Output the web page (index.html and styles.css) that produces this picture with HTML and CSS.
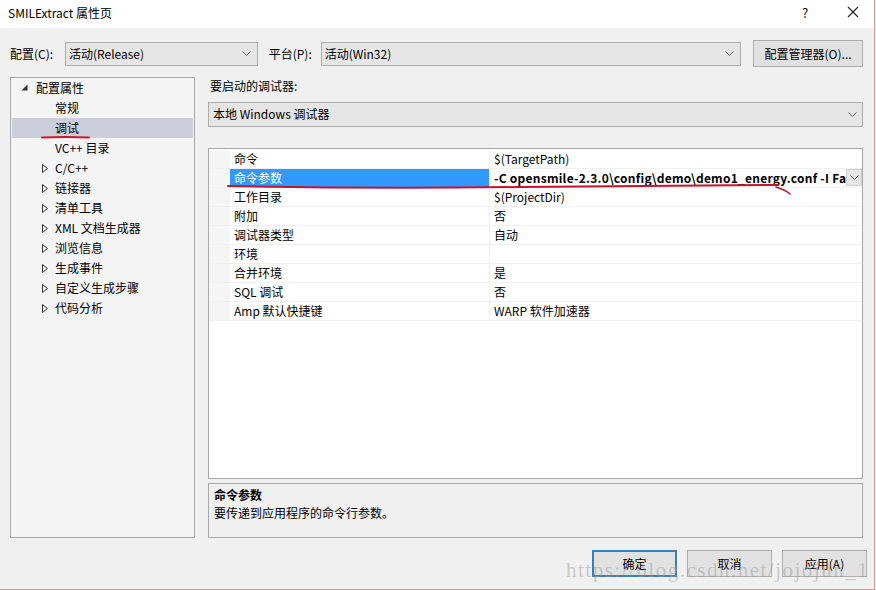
FILE: index.html
```html
<!DOCTYPE html>
<html lang="zh-CN">
<head>
  <meta charset="UTF-8">
  <title>SMILExtract 属性页</title>
  <link rel="stylesheet" href="styles.css">
</head>
<body>
<div class="window">
  <div class="titlebar">
    <span class="title">SMILExtract 属性页</span>
    <span class="tb-help">?</span>
    <svg class="tb-close" width="12" height="12" viewBox="0 0 12 12"><path d="M1 1L11 11M11 1L1 11" stroke="#222" stroke-width="1.1" fill="none"/></svg>
  </div>

  <div class="content">
    <div class="config-row">
      <span class="lbl">配置(C):</span>
      <div class="combo combo-config"><span>活动(Release)</span>
        <svg class="chev" width="9" height="5" viewBox="0 0 9 5"><path d="M0.5 0.5L4.5 4.5L8.5 0.5" stroke="#606060" fill="none"/></svg></div>
      <span class="lbl lbl-platform">平台(P):</span>
      <div class="combo combo-platform"><span>活动(Win32)</span>
        <svg class="chev" width="9" height="5" viewBox="0 0 9 5"><path d="M0.5 0.5L4.5 4.5L8.5 0.5" stroke="#606060" fill="none"/></svg></div>
      <button class="btn btn-manager">配置管理器(O)...</button>
    </div>

    <div class="main">
      <div class="tree">
        <div class="node root">
          <svg class="exp" width="7" height="7" viewBox="0 0 7 7"><path d="M6.5 0.5V6.5H0.5Z" fill="#333"/></svg>
          <span>配置属性</span>
        </div>
        <div class="node leaf"><span>常规</span></div>
        <div class="node leaf selected"><span>调试</span></div>
        <div class="node leaf"><span>VC++ 目录</span></div>
        <div class="node"><svg class="col" width="6" height="9" viewBox="0 0 6 9"><path d="M0.5 0.5L5.5 4.5L0.5 8.5Z" stroke="#333" fill="none"/></svg><span>C/C++</span></div>
        <div class="node"><svg class="col" width="6" height="9" viewBox="0 0 6 9"><path d="M0.5 0.5L5.5 4.5L0.5 8.5Z" stroke="#333" fill="none"/></svg><span>链接器</span></div>
        <div class="node"><svg class="col" width="6" height="9" viewBox="0 0 6 9"><path d="M0.5 0.5L5.5 4.5L0.5 8.5Z" stroke="#333" fill="none"/></svg><span>清单工具</span></div>
        <div class="node"><svg class="col" width="6" height="9" viewBox="0 0 6 9"><path d="M0.5 0.5L5.5 4.5L0.5 8.5Z" stroke="#333" fill="none"/></svg><span>XML 文档生成器</span></div>
        <div class="node"><svg class="col" width="6" height="9" viewBox="0 0 6 9"><path d="M0.5 0.5L5.5 4.5L0.5 8.5Z" stroke="#333" fill="none"/></svg><span>浏览信息</span></div>
        <div class="node"><svg class="col" width="6" height="9" viewBox="0 0 6 9"><path d="M0.5 0.5L5.5 4.5L0.5 8.5Z" stroke="#333" fill="none"/></svg><span>生成事件</span></div>
        <div class="node"><svg class="col" width="6" height="9" viewBox="0 0 6 9"><path d="M0.5 0.5L5.5 4.5L0.5 8.5Z" stroke="#333" fill="none"/></svg><span>自定义生成步骤</span></div>
        <div class="node"><svg class="col" width="6" height="9" viewBox="0 0 6 9"><path d="M0.5 0.5L5.5 4.5L0.5 8.5Z" stroke="#333" fill="none"/></svg><span>代码分析</span></div>
      </div>

      <div class="right">
        <div class="debugger-label">要启动的调试器:</div>
        <div class="combo combo-debugger"><span>本地 Windows 调试器</span>
          <svg class="chev" width="9" height="5" viewBox="0 0 9 5"><path d="M0.5 0.5L4.5 4.5L8.5 0.5" stroke="#606060" fill="none"/></svg></div>

        <div class="grid">
          <div class="row"><div class="gut"></div><div class="name">命令</div><div class="val">$(TargetPath)</div></div>
          <div class="row sel"><div class="gut"></div><div class="name">命令参数</div><div class="val bold"><span class="val-text">-C opensmile-2.3.0\config\demo\demo1_energy.conf -I Family.wav -O energy.csv</span>
            <span class="val-drop"><svg width="9" height="5" viewBox="0 0 9 5"><path d="M0.5 0.5L4.5 4.5L8.5 0.5" stroke="#606060" fill="none"/></svg></span></div></div>
          <div class="row"><div class="gut"></div><div class="name">工作目录</div><div class="val">$(ProjectDir)</div></div>
          <div class="row"><div class="gut"></div><div class="name">附加</div><div class="val">否</div></div>
          <div class="row"><div class="gut"></div><div class="name">调试器类型</div><div class="val">自动</div></div>
          <div class="row"><div class="gut"></div><div class="name">环境</div><div class="val"></div></div>
          <div class="row"><div class="gut"></div><div class="name">合并环境</div><div class="val">是</div></div>
          <div class="row"><div class="gut"></div><div class="name">SQL 调试</div><div class="val">否</div></div>
          <div class="row"><div class="gut"></div><div class="name">Amp 默认快捷键</div><div class="val">WARP 软件加速器</div></div>
        </div>

        <div class="desc">
          <div class="desc-title">命令参数</div>
          <div class="desc-text">要传递到应用程序的命令行参数。</div>
        </div>
      </div>
    </div>

    <div class="buttons">
      <button class="btn btn-dlg focused">确定</button>
      <button class="btn btn-dlg">取消</button>
      <button class="btn btn-dlg">应用(A)</button>
    </div>
  </div>

  <!-- 手画的红色标注 -->
  <svg class="marks" width="876" height="590" viewBox="0 0 876 590">
    <path d="M42 137.5C58 137 74 137 89 137.5" stroke="#d2122e" stroke-width="2" fill="none" stroke-linecap="round"/>
    <path d="M228 186C330 188 430 188 520 187C620 186 700 185 778 185" stroke="#c41230" stroke-width="2" fill="none" stroke-linecap="round"/>
    <path d="M776 187C782 189 787 191 790 194" stroke="#c41230" stroke-width="1.6" fill="none" stroke-linecap="round"/>
  </svg>
  <div class="watermark">https://blog.csdn.net/jojojun_1</div>
</div>
</body>
</html>
```

FILE: styles.css
```css
body {
  margin: 0;
  padding: 0;
  font-family: "Segoe UI", "Noto Sans CJK SC", sans-serif;
  font-size: 12px;
  color: #000;
  background: #f0f0f0;
}

.window {
  position: relative;
  width: 874px;
  height: 589px;
  background: #f0f0f0;
  border-right: 1px solid #d59a9a;
  border-bottom: 1px solid #d59a9a;
  overflow: hidden;
}

.titlebar {
  height: 28px;
  background: #fff;
  display: flex;
  align-items: center;
  padding: 0 0 4px 8px;
  box-sizing: border-box;
}

.title {
  flex: 1;
  font-size: 12px;
}

.tb-help {
  width: 20px;
  margin-right: 25px;
  font-size: 13px;
}

.tb-close {
  margin-right: 15px;
}

.content {
  padding: 12px 11px 0 10px;
}

.config-row {
  display: flex;
  align-items: center;
  height: 27px;
}

.lbl {
  width: 55px;
}

.lbl-platform {
  width: 52px;
  margin-left: 11px;
}

.combo {
  height: 24px;
  box-sizing: border-box;
  background: #e5e5e5;
  border: 1px solid #acacac;
  display: flex;
  align-items: center;
  padding: 0 6px 0 3px;
}

.combo span {
  flex: 1;
}

.combo-config { width: 193px; }
.combo-platform { width: 421px; }

.btn {
  font-family: inherit;
  font-size: 12px;
  background: #e1e1e1;
  border: 1px solid #adadad;
  color: #000;
  padding: 0;
}

.btn-manager {
  width: 110px;
  height: 27px;
  margin-left: 12px;
}

.main {
  display: flex;
  gap: 13px;
  margin-top: 10px;
}

.tree {
  width: 185px;
  height: 461px;
  box-sizing: border-box;
  border: 1px solid #a8a8a8;
  background: #f4f4f4;
  padding: 0 1px 1px;
}

.node {
  height: 20px;
  display: flex;
  align-items: center;
  padding-left: 31px;
}

.node span {
  margin-top: -2px;
}

.node .col {
  margin-left: -1px;
  margin-right: 7px;
}

.node.root {
  padding-left: 9px;
}

.node.root .exp {
  margin-right: 8px;
  margin-top: -1px;
}

.node.leaf {
  padding-left: 43px;
}

.node.selected {
  background: #cccedb;
}

.right {
  width: 655px;
}

.debugger-label {
  height: 18px;
  line-height: 18px;
  padding-left: 2px;
}

.combo-debugger {
  width: 655px;
  height: 25px;
  margin-top: 7px;
  padding-left: 4px;
  padding-right: 5px;
}

.combo-debugger span {
  margin-top: -2px;
}

.grid {
  margin-top: 21px;
  height: 331px;
  box-sizing: border-box;
  border: 1px solid #a8a8a8;
  background: #fff;
  padding-top: 1px;
}

.row {
  display: flex;
  height: 19px;
  box-sizing: border-box;
  border-bottom: 1px solid #f0f0f0;
}

.gut {
  width: 21px;
  background: #f5f5f5;
  flex: none;
}

.name {
  width: 260px;
  flex: none;
  padding-left: 4px;
  box-sizing: border-box;
  line-height: 18px;
  border-right: 1px solid #f0f0f0;
}

.val {
  flex: 1;
  min-width: 0;
  display: flex;
  padding-left: 4px;
  line-height: 18px;
}

.row.sel .name {
  background: #3399ff;
  color: #fff;
}

.val.bold {
  font-weight: bold;
  letter-spacing: 0.25px;
}

.val-text {
  flex: 1;
  white-space: nowrap;
  overflow: hidden;
}

.val-drop {
  width: 16px;
  height: 17px;
  box-sizing: border-box;
  background: #e5e5e5;
  border: 1px solid #cfcfcf;
  display: flex;
  align-items: center;
  justify-content: center;
  flex: none;
}

.desc {
  margin-top: 4px;
  height: 55px;
  box-sizing: border-box;
  border: 1px solid #a8a8a8;
  background: #f0f0f0;
  padding: 2px 5px;
}

.desc-title {
  font-weight: bold;
  line-height: 18px;
}

.desc-text {
  line-height: 18px;
}

.buttons {
  display: flex;
  justify-content: flex-end;
  gap: 10px;
  margin-top: 12px;
  margin-right: -4px;
}

.btn-dlg {
  width: 85px;
  height: 27px;
}

.btn-dlg.focused {
  border: 2px solid #3b7fb3;
}

.marks {
  position: absolute;
  left: 0;
  top: 0;
  pointer-events: none;
}

.watermark {
  position: absolute;
  left: 566px;
  top: 558px;
  font-family: "Liberation Serif", "DejaVu Serif", serif;
  font-size: 21px;
  letter-spacing: 1.5px;
  color: rgba(150, 150, 150, 0.45);
  white-space: nowrap;
  pointer-events: none;
}
```
